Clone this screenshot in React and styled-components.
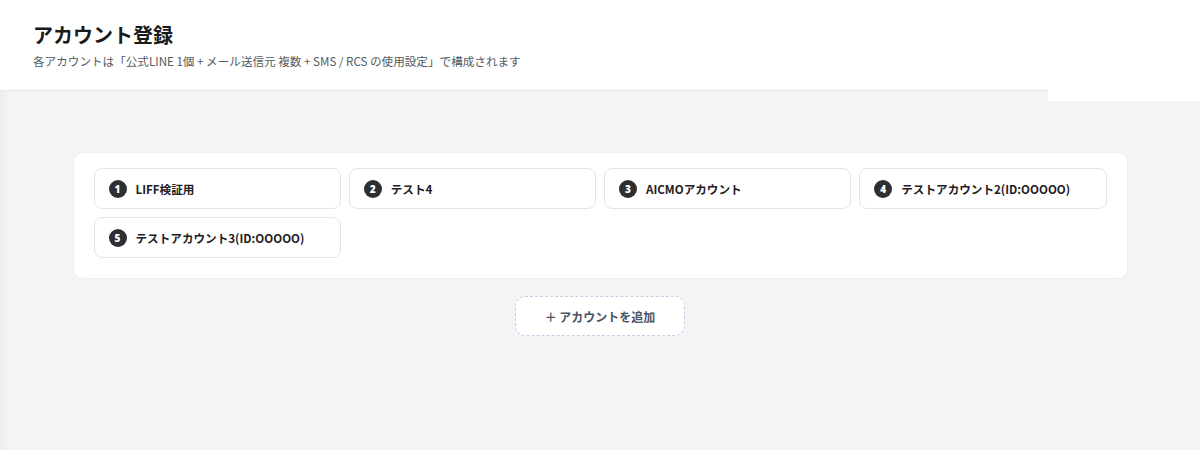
import React from 'react'
import styled, { createGlobalStyle } from 'styled-components'

const GlobalStyle = createGlobalStyle`
  * { box-sizing: border-box; }
  html, body { margin: 0; padding: 0; }
  body {
    font-family: "Noto Sans CJK JP", "Noto Sans", sans-serif;
    background: #f3f4f6;
    color: #222;
  }
`

const accounts = [
  'LIFF検証用',
  'テスト4',
  'AICMOアカウント',
  'テストアカウント2(ID:OOOOO)',
  'テストアカウント3(ID:OOOOO)',
]

export default function App() {
  return (
    <Page>
      <GlobalStyle />
      <Header>
        <Title>アカウント登録</Title>
        <Subtitle>各アカウントは「公式LINE 1個 + メール送信元 複数 + SMS / RCS の使用設定」で構成されます</Subtitle>
      </Header>
      <CornerPatch />
      <Main>
        <Card>
          <Grid>
            {accounts.map((name, i) => (
              <AccountItem key={name}>
                <Badge>{i + 1}</Badge>
                <AccountName>{name}</AccountName>
              </AccountItem>
            ))}
          </Grid>
        </Card>
        <AddButton>＋ アカウントを追加</AddButton>
      </Main>
    </Page>
  )
}

const Page = styled.div`
  position: relative;
  min-height: 450px;
  background: #f3f4f6;
  box-shadow: inset 12px 0 10px -8px rgba(0, 0, 0, 0.04);
`

// ------------
// HEADER

const Header = styled.header`
  background: #ffffff;
  height: 91px;
  padding: 21px 33px 0;
  border-bottom: 1px solid #e6e7ea;
`

const Title = styled.h1`
  margin: 0;
  font-size: 20px;
  font-weight: 700;
  line-height: 28px;
  color: #1a1a1a;
`

const Subtitle = styled.p`
  margin: 4px 0 0;
  font-size: 11.6px;
  line-height: 16px;
  color: #555a60;
`

// white block covering the right end of the header line
const CornerPatch = styled.div`
  position: absolute;
  top: 0;
  right: 0;
  width: 152px;
  height: 101px;
  background: #ffffff;
`

// ------------
// ACCOUNTS

const Main = styled.main`
  display: flex;
  flex-direction: column;
  align-items: center;
  padding: 61px 0 0;
`

const Card = styled.section`
  width: 1055px;
  background: #ffffff;
  border: 1px solid #eceef1;
  border-radius: 10px;
  padding: 15px 20px 20px;
`

const Grid = styled.div`
  display: grid;
  grid-template-columns: repeat(4, 1fr);
  gap: 8px;
`

const AccountItem = styled.div`
  display: flex;
  align-items: center;
  gap: 9px;
  height: 41px;
  padding: 0 14px;
  background: #ffffff;
  border: 1px solid #e2e5ec;
  border-radius: 8px;
`

const Badge = styled.span`
  display: flex;
  align-items: center;
  justify-content: center;
  width: 18px;
  height: 18px;
  border-radius: 50%;
  background: #2e2f33;
  color: #ffffff;
  font-family: "Open Sans", sans-serif;
  font-size: 10px;
  font-weight: 800;
`

const AccountName = styled.span`
  font-size: 11.6px;
  font-weight: 700;
  color: #1f2024;
`

const AddButton = styled.button`
  margin-top: 17px;
  width: 170px;
  height: 40px;
  background: #ffffff;
  border: 1px dashed #c9cde3;
  border-radius: 10px;
  font-family: "Noto Sans CJK JP", sans-serif;
  font-size: 12px;
  font-weight: 700;
  color: #4a5367;
  cursor: pointer;
`
